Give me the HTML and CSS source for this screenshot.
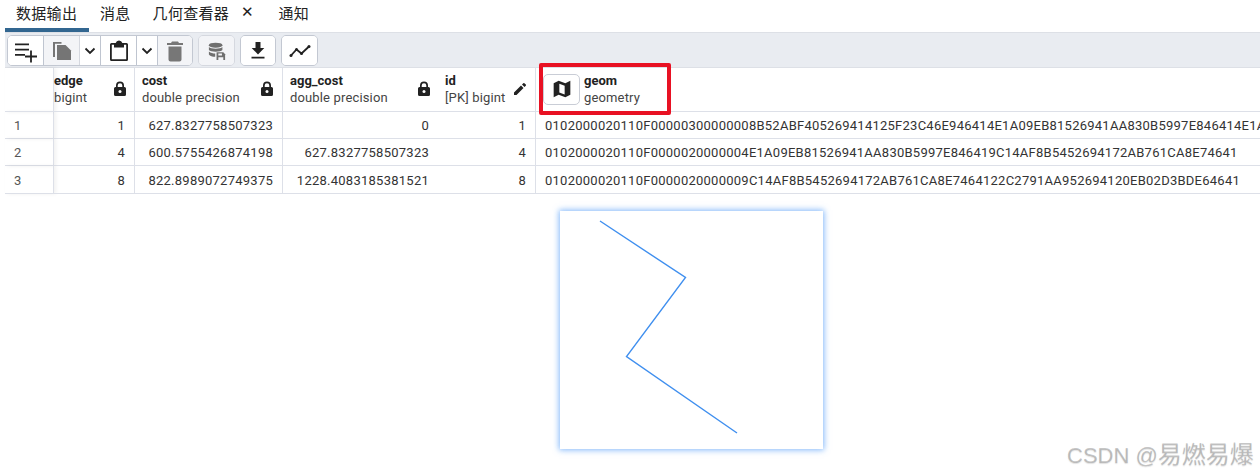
FILE: index.html
```html
<!DOCTYPE html>
<html lang="zh">
<head>
<meta charset="utf-8">
<title>数据输出</title>
<link rel="stylesheet" href="styles.css">
</head>
<body>
<div class="app">
  <nav class="tabs">
    <div class="tab active">数据输出</div>
    <div class="tab">消息</div>
    <div class="tab">几何查看器<span class="close">✕</span></div>
    <div class="tab">通知</div>
  </nav>
  <div class="toolbar">
    <div class="group first">
      <button class="btn w36"><svg width="24" height="24" viewBox="0 0 24 24"><path d="M1 4.500h14v1.800H1zM1 9.800h14v1.800H1zM1 15h10v1.800H1zM16.100 11.500h1.800v5.100H23v1.800h-5.100v5.100h-1.800v-5.100H11v-1.800h5.100z" fill="#222"/></svg></button>
      <button class="btn w36 dim"><svg width="24" height="24" viewBox="0 0 24 24"><path d="M3 3h8.500v1.800H5V18H3z" fill="#757575"/><path d="M7 6h8.500l5.500 5.500V21H7z" fill="#757575"/></svg></button>
      <button class="btn w21"><svg width="12" height="8" viewBox="0 0 12 8"><path d="M1.500 1.500 6 6l4.500-4.500" fill="none" stroke="#222" stroke-width="1.800"/></svg></button>
      <button class="btn w36"><svg width="22" height="24" viewBox="0 0 22 24"><path d="M3.500 4H7.700a3.400 3.400 0 0 1 6.600 0h4.200A1.500 1.500 0 0 1 20 5.500v15a1.500 1.500 0 0 1-1.500 1.500h-15A1.500 1.500 0 0 1 2 20.500v-15A1.500 1.500 0 0 1 3.500 4zM3.800 5.800v14.400h14.400V5.800H16v2.700H6V5.800z" fill="#222" fill-rule="evenodd"/></svg></button>
      <button class="btn w21"><svg width="12" height="8" viewBox="0 0 12 8"><path d="M1.500 1.500 6 6l4.500-4.500" fill="none" stroke="#222" stroke-width="1.800"/></svg></button>
      <button class="btn grow dim"><svg width="20" height="22" viewBox="0 0 20 22"><path d="M7 1.500h6l1 1.500h4v2H2V3h4zM3.500 6.500h13v13a2 2 0 0 1-2 2h-9a2 2 0 0 1-2-2z" fill="#777"/></svg></button>
    </div>
    <div class="group off">
      <button class="btn grow dim"><svg width="18" height="18" viewBox="0 0 20 20"><ellipse cx="8.500" cy="3.500" rx="7.500" ry="2.800" fill="#6f6f6f"/><path d="M1 5.500c2 2.500 13 2.500 15 0V9c-2 2.300-13 2.300-15 0zM1 10.500c1.500 1.800 5 2.200 7 2.200v3.800c-3 0-6-.5-7-2.500z" fill="#6f6f6f"/><path d="M9.500 11.500H17l2 2v6.500H9.500z" fill="#6f6f6f"/><path d="M11.500 12.800h4v2.200h-4zM11.500 17h5.500v3h-5.500z" fill="#f3f4f7"/></svg></button>
    </div>
    <div class="group">
      <button class="btn grow"><svg width="20" height="20" viewBox="0 0 20 20"><path d="M7.500 1h5v6h3.800L10 13.500 3.700 7h3.800zM3.500 15.800h13v1.800h-13z" fill="#222"/></svg></button>
    </div>
    <div class="group">
      <button class="btn grow"><svg width="24" height="14" viewBox="0 0 24 14"><path d="M3 11.500 8.500 5.500l5 4L21 2.500" fill="none" stroke="#222" stroke-width="1.800"/><circle cx="3" cy="11.500" r="1.500" fill="#222"/><circle cx="8.500" cy="5.500" r="1.500" fill="#222"/><circle cx="13.500" cy="9.500" r="1.500" fill="#222"/><circle cx="21" cy="2.500" r="1.500" fill="#222"/></svg></button>
    </div>
  </div>
  <section class="grid">
    <div class="hcell rowhead"></div>
    <div class="hcell edge"><div class="ctext flush"><b>edge</b><span>bigint</span></div><svg class="lock" width="14" height="16" viewBox="0 0 14 16"><use href="#lock"/></svg></div>
    <div class="hcell"><div class="ctext"><b>cost</b><span>double precision</span></div><svg class="lock" width="14" height="16" viewBox="0 0 14 16"><use href="#lock"/></svg></div>
    <div class="hcell agg"><div class="ctext"><b>agg_cost</b><span>double precision</span></div><svg class="lock" width="14" height="16" viewBox="0 0 14 16"><use href="#lock"/></svg></div>
    <div class="hcell idhead"><div class="ctext"><b>id</b><span>[PK] bigint</span></div><svg class="pencil" width="14" height="14" viewBox="0 0 14 14"><path d="M1 10.500V13h2.500L10.500 6 8 3.500zM9 2.500 11.500 5l1.300-1.300a.8.8 0 0 0 0-1.100L11.400 1.200a.8.8 0 0 0-1.100 0z" fill="#222"/></svg></div>
    <div class="hcell geomhead">
      <button class="mapbtn"><svg width="20" height="20" viewBox="0 0 18 18"><path d="M1.500 3.800 6 1.500l6 2.300 4.500-2.300v12.700L12 16.500l-6-2.300-4.500 2.300zM6.600 4.300v7.900l4.800 1.800V6.100z" fill="#222" fill-rule="evenodd"/></svg></button>
      <div class="ctext"><b>geom</b><span>geometry</span></div>
      <div class="redbox"></div>
    </div>

    <div class="cell rowhead">1</div><div class="cell num">1</div><div class="cell num">627.8327758507323</div><div class="cell num agg">0</div><div class="cell num">1</div><div class="cell geomc">0102000020110F00000300000008B52ABF405269414125F23C46E946414E1A09EB81526941AA830B5997E846414E1A09EB81526941AA830B5997E846419C14AF8B5452694172AB761CA8E74641</div>
    <div class="cell rowhead">2</div><div class="cell num">4</div><div class="cell num">600.5755426874198</div><div class="cell num agg">627.8327758507323</div><div class="cell num">4</div><div class="cell geomc">0102000020110F0000020000004E1A09EB81526941AA830B5997E846419C14AF8B5452694172AB761CA8E74641</div>
    <div class="cell rowhead r3">3</div><div class="cell num r3">8</div><div class="cell num r3">822.8989072749375</div><div class="cell num agg r3">1228.4083185381521</div><div class="cell num r3">8</div><div class="cell geomc r3">0102000020110F0000020000009C14AF8B5452694172AB761CA8E7464122C2791AA952694120EB02D3BDE64641</div>
  </section>
  <div class="preview">
    <svg class="map" width="263" height="238" viewBox="0 0 263 238"><path d="M40 10 125.500 66.500 66.500 145.500 177 222" fill="none" stroke="#3f8fef" stroke-width="1.400"/></svg>
  </div>
  <div class="watermark">CSDN @<span class="wm-cjk">易燃易爆</span></div>
</div>
<svg width="0" height="0" class="defs"><defs><symbol id="lock" viewBox="0 0 14 16"><path d="M3 6V4.500a4 4 0 0 1 8 0V6h.5A1.500 1.500 0 0 1 13 7.500v6a1.500 1.500 0 0 1-1.500 1.500h-9A1.500 1.500 0 0 1 1 13.500v-6A1.500 1.500 0 0 1 2.500 6zM4.700 6h4.600V4.500a2.300 2.300 0 0 0-4.600 0z" fill="#222" fill-rule="evenodd"/><circle cx="7" cy="10.500" r="1.500" fill="#fff"/></symbol></defs></svg>
</body>
</html>
```
FILE: styles.css
```css
* { box-sizing: border-box; }
html, body { margin: 0; padding: 0; background: #fff; }
body { width: 1260px; height: 471px; overflow: hidden; font-family: Roboto, "Noto Sans CJK SC", sans-serif; color: #222; }
.app { position: relative; width: 1260px; height: 471px; padding-left: 5px; overflow: hidden; }
.defs { position: absolute; }

.tabs { display: flex; height: 32px; }
.tab { height: 32px; padding: 0 11px 4px; display: flex; align-items: center; font-size: 15px; letter-spacing: 0.3px; color: #222; border-bottom: 4px solid transparent; white-space: nowrap; }
.tab.active { border-bottom-color: #326690; width: 84px; }
.close { margin: 0 2px 0 12px; font-size: 15px; }

.toolbar { display: flex; gap: 5px; height: 36px; padding: 2px 0 0 2.300px; background: #e9ecf1; border-top: 1px solid #dde0e6; border-bottom: 1px solid #dde0e6; }
.group { display: flex; width: 36.500px; height: 31px; background: #fff; border: 1px solid #c3c8d2; border-radius: 5px; overflow: hidden; }
.group.first { width: 186px; }
.group.off { border-color: #d5d8df; }
.btn { height: 100%; padding: 0; border: 0; border-right: 1px solid #bfc5d0; background: #fff; display: flex; align-items: center; justify-content: center; }
.btn:last-child { border-right: 0; }
.btn.dim { background: #f3f4f7; border-right-color: #d5d8df; }
.w36 { width: 36px; }
.w21 { width: 21px; }
.grow { flex: 1; }

.grid { display: grid; grid-template-columns: 49px 81px 148px 153px 100px 730px; grid-template-rows: 44px 27px 27px 28px; width: 1261px; }
.hcell { position: relative; display: flex; align-items: center; justify-content: space-between; padding: 0 8px 2px 7px; border-right: 1px solid #dde0e8; border-bottom: 1px solid #dde0e8; }
.hcell.edge { padding-right: 7px; }
.hcell.agg { border-right: 0; padding-right: 5px; }
.ctext { display: flex; flex-direction: column; font-size: 13px; line-height: 17px; white-space: nowrap; }
.ctext b { font-weight: 700; color: #222; }
.ctext span { color: #444; letter-spacing: 0.15px; }
.flush { margin-left: -7px; }
.idhead { padding-left: 9px; padding-right: 8px; }
.lock { flex: none; }
.pencil { flex: none; }
.geomhead { justify-content: flex-start; gap: 4px; padding: 0 0 1px 7px; }
.mapbtn { width: 37px; height: 31px; padding: 0; border: 1px solid #c9cdd6; border-radius: 5px; background: #fff; display: flex; align-items: center; justify-content: center; }
.redbox { position: absolute; left: 3px; top: -5px; width: 132px; height: 52px; border: 4px solid #e81123; border-radius: 2px; }

.cell { display: flex; align-items: center; padding: 0 9px; font-size: 13px; letter-spacing: 0.25px; color: #333; border-right: 1px solid #dde0e8; border-bottom: 1px solid #dde0e8; white-space: nowrap; overflow: hidden; }
.cell.agg { border-right: 0; padding-right: 7px; }
.cell.r3 { padding-top: 2px; }
.num { justify-content: flex-end; }
.rowhead { color: #555; box-shadow: 2px 0 4px rgba(0,0,0,.06); padding-left: 9px; }
.geomc { border-right: 0; }

.preview { display: flex; padding: 17px 0 0 555px; }
.map { display: block; background: #fff; box-shadow: 0 0 6px 1px rgba(90,160,250,.75); }

.watermark { position: absolute; left: 1067px; top: 435px; font-family: "Liberation Sans", "Noto Sans CJK SC", sans-serif; font-size: 22px; font-weight: 400; color: rgba(130,130,130,.45); white-space: nowrap; text-shadow: 0 1px 1px rgba(180,180,180,.4); }
.wm-cjk { font-size: 24px; }
```
